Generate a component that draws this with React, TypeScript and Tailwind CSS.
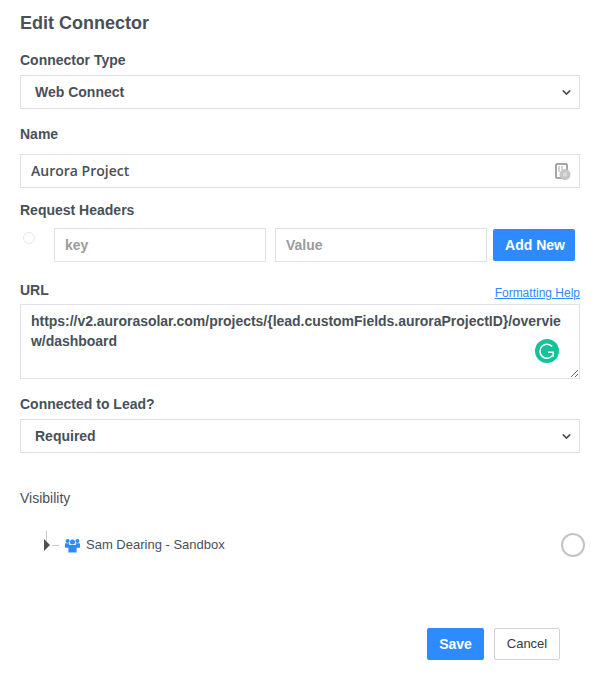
import { ChevronDown } from 'lucide-react';

const labelClass = 'block text-[14px] leading-[20px] font-bold text-[#495057]';
const fieldClass =
  'w-full border border-[#dee2e6] bg-white text-[14px] font-bold text-[#495057] outline-none';

function SelectField({ value }: { value: string }) {
  return (
    <div className="relative">
      <select
        defaultValue={value}
        className={`${fieldClass} h-[34px] appearance-none pl-[14px] pr-8`}
      >
        <option>{value}</option>
      </select>
      <ChevronDown
        size={13}
        strokeWidth={3}
        className="absolute right-[7px] top-[11px] text-[#495057] pointer-events-none"
      />
    </div>
  );
}

function GroupIcon() {
  return (
    <svg width="15" height="15" viewBox="0 0 15 15" fill="#2e8bff">
      <circle cx="2.6" cy="2.9" r="2" />
      <circle cx="7.5" cy="4" r="2.5" />
      <circle cx="12.4" cy="2.9" r="2" />
      <path d="M0 6.2c0-.6.4-1 1-1h3.2v4.6H0zM10.8 5.2H14c.6 0 1 .4 1 1v3.6h-4.2z" />
      <path d="M3.4 8c0-.6.5-1 1-1h6.2c.5 0 1 .4 1 1v6.4H3.4z" />
    </svg>
  );
}

export default function App() {
  return (
    <div className="w-[600px] h-[700px] bg-white px-5 font-['Liberation_Sans',sans-serif] overflow-hidden">
      <h1 className="pt-[12px] text-[18px] leading-[22px] font-bold text-[#495057]">
        Edit Connector
      </h1>

      <label className={`${labelClass} mt-[16px] mb-[5px]`}>Connector Type</label>
      <SelectField value="Web Connect" />

      <label className={`${labelClass} mt-[15px] mb-[10px]`}>Name</label>
      <div className="relative">
        <input
          defaultValue="Aurora Project"
          className={`${fieldClass} h-[34px] px-[10px] pb-[2px] font-['Open_Sans',sans-serif] !font-semibold`}
        />
        <svg
          width="18"
          height="20"
          viewBox="0 0 18 20"
          className="absolute right-[8px] top-[8px]"
        >
          <rect x="2" y="2" width="11" height="14" rx="1" fill="none" stroke="#8a8a8a" strokeWidth="1.5" />
          <path d="M5 4v6M8 4v4" stroke="#a8a8a8" strokeWidth="1" />
          <circle cx="11" cy="12.5" r="5.5" fill="#c6c6c6" />
          <path d="M10 10.5v4M12 10.5v4" stroke="#ececec" strokeWidth="1" />
        </svg>
      </div>

      <label className={`${labelClass} mt-[12px] mb-[8px]`}>Request Headers</label>
      <div className="flex items-start">
        <span className="mt-[4px] ml-[3px] size-[12px] rounded-full border border-[#e3e6e8]" />
        <input
          placeholder="key"
          className={`${fieldClass} ml-[19px] h-[34px] !w-[212px] px-[10px] placeholder:text-[#9b9b9b]`}
        />
        <input
          placeholder="Value"
          className={`${fieldClass} ml-[9px] h-[34px] !w-[212px] px-[10px] placeholder:text-[#9b9b9b]`}
        />
        <button className="ml-[6px] h-[32px] mt-[1px] w-[82px] rounded-[2px] bg-[#2e8bff] pl-[2px] text-[14px] font-bold text-white">
          Add New
        </button>
      </div>

      <div className="mt-[18px] mb-[4px] flex items-end justify-between">
        <label className={labelClass}>URL</label>
        <a href="#" className="relative top-[1px] text-[12px] leading-[16px] text-[#2e8bff] underline">
          Formatting Help
        </a>
      </div>
      <div className="relative h-[75px]">
        <textarea
          defaultValue="https://v2.aurorasolar.com/projects/{lead.customFields.auroraProjectID}/overview/dashboard"
          className={`${fieldClass} block h-[75px] px-[10px] py-[6px] leading-[20px] tracking-[-0.03px] break-all`}
        />
        <span className="absolute right-[21px] top-[35px] flex size-[24px] items-center justify-center rounded-full bg-[#15c39a]">
          <svg width="18" height="18" viewBox="0 0 18 18" fill="none" stroke="#fff" strokeWidth="1.5">
            <path d="M14.2 4.6A7 7 0 1 0 14.6 13.4" />
            <path d="M10 10.2h5.2v4.6" />
          </svg>
        </span>
      </div>

      <label className={`${labelClass} mt-[15px] mb-[5px]`}>Connected to Lead?</label>
      <SelectField value="Required" />

      <p className="mt-[35px] text-[14px] leading-[20px] text-[#495057]">Visibility</p>

      <div className="mt-[25px] flex items-center justify-between pl-[24px] -mr-[5px]">
        <div className="flex items-center">
          <div className="relative flex h-[24px] w-[18px] items-center">
            <span className="absolute left-[2px] -top-[2px] h-[10px] w-px bg-[#c9c9c9]" />
            <span className="size-0 border-y-[6px] border-l-[6px] border-y-transparent border-l-[#495057]" />
            <span className="ml-[2px] h-px w-[7px] bg-[#c9c9c9]" />
          </div>
          <span className="ml-[3px] flex">
            <GroupIcon />
          </span>
          <span className="ml-[6px] text-[13px] text-[#495057]">Sam Dearing - Sandbox</span>
        </div>
        <span className="size-[24px] rounded-full border-2 border-[#c4c4c4]" />
      </div>

      <div className="mt-[71px] flex justify-end pr-[20px]">
        <button className="h-[32px] w-[57px] rounded-[2px] bg-[#2e8bff] text-[14px] font-bold text-white">
          Save
        </button>
        <button className="ml-[10px] h-[32px] w-[66px] rounded-[2px] border border-[#d0d0d0] bg-white text-[13px] text-[#343a40]">
          Cancel
        </button>
      </div>
    </div>
  );
}
